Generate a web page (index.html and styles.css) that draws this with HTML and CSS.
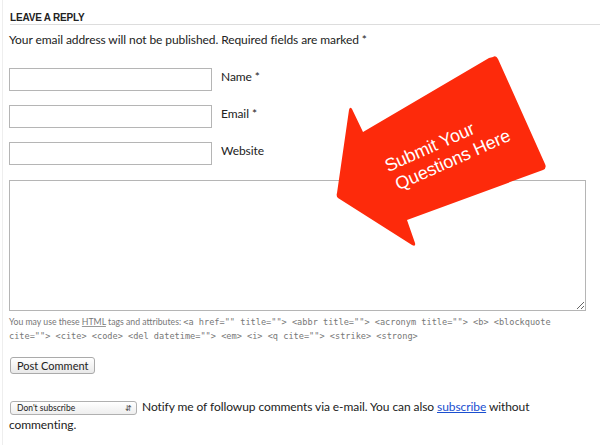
FILE: index.html
```html
<!DOCTYPE html>
<html>
<head>
<meta charset="utf-8">
<link rel="stylesheet" href="styles.css">
</head>
<body>
<div class="page">
  <h3 class="reply-title">Leave a Reply</h3>
  <p class="notes">Your email address will not be published. Required fields are marked *</p>
  <div class="field"><input class="text-input" type="text"><label>Name *</label></div>
  <div class="field"><input class="text-input" type="text"><label>Email *</label></div>
  <div class="field"><input class="text-input" type="text"><label>Website</label></div>
  <textarea class="comment"></textarea>
  <p class="allowed">You may use these <abbr class="html-abbr">HTML</abbr> tags and attributes: <code>&lt;a href="" title=""&gt; &lt;abbr title=""&gt; &lt;acronym title=""&gt; &lt;b&gt; &lt;blockquote cite=""&gt; &lt;cite&gt; &lt;code&gt; &lt;del datetime=""&gt; &lt;em&gt; &lt;i&gt; &lt;q cite=""&gt; &lt;strike&gt; &lt;strong&gt;</code></p>
  <button class="submit">Post Comment</button>
  <div class="subscribe">
    <div class="select"><span>Don't subscribe</span><span class="updown">&#8693;</span></div>
    <p class="subscribe-text">Notify me of followup comments via e-mail. You can also <a href="#">subscribe</a> without commenting.</p>
  </div>

  <svg class="arrow" width="230" height="210" viewBox="330 50 230 210">
    <path d="M493 57 Q496 55 498 59 L545 164 Q547 168 543 170 L407 220 L415 243 Q416 247 412 245 L338 198 Q336 196 337 193 L349 110 Q350 106 352 109 L363 132 L489 58 Z" fill="#fd2a0b"/>
    <g transform="rotate(-24 441 153)" fill="#fff" font-family="Liberation Sans, Arial, sans-serif" font-size="18" text-anchor="middle">
      <text x="433" y="149">Submit Your</text>
      <text x="449" y="170">Questions Here</text>
    </g>
  </svg>
</div>
</body>
</html>
```
FILE: styles.css
```css
html, body {
  margin: 0;
  background: #fff;
}
.page {
  position: relative;
  margin-left: 2px;
  border-left: 1px solid #eee;
  padding: 12px 0 0 6px;
  height: 433px;
  font-family: Lato, "Open Sans", sans-serif;
  font-size: 12px;
  letter-spacing: -0.08px;
  color: #222;
}
.reply-title {
  margin: 0 0 0 1px;
  font-family: "Liberation Sans", Arial, sans-serif;
  font-size: 10px;
  line-height: 11px;
  letter-spacing: -0.2px;
  font-weight: bold;
  text-transform: uppercase;
  color: #222;
  padding-bottom: 1px;
  border-bottom: 1px solid #ddd;
}
.notes {
  margin: 7px 0 0 0;
  line-height: 16px;
}
.field {
  display: flex;
  align-items: flex-start;
  gap: 9px;
  margin-top: 14px;
}
.field:first-of-type { margin-top: 20px; }
.field label {
  line-height: 18px;
}
.text-input {
  box-sizing: border-box;
  width: 203px;
  height: 23px;
  margin: 0;
  border: 1px solid #b5b5b5;
  background: #fff;
}
.comment {
  display: block;
  box-sizing: border-box;
  width: 577px;
  height: 131px;
  margin: 15px 0 0 0;
  border: 1px solid #b5b5b5;
  resize: both;
}
.allowed {
  margin: 4px 0 0 0;
  font-size: 8.7px;
  letter-spacing: 0;
  line-height: 13px;
  color: #777;
  width: 570px;
}
.html-abbr {
  text-decoration: underline;
  text-decoration-color: #999;
}
.allowed code {
  font-family: "DejaVu Sans Mono", monospace;
  font-size: 8.6px;
}
.submit {
  display: block;
  margin: 14px 0 0 1px;
  padding: 0 6px;
  height: 17px;
  font-family: Lato, sans-serif;
  font-size: 11px;
  color: #222;
  background: linear-gradient(#fff, #e9e9e9);
  border: 1px solid #aaa;
  border-radius: 3px;
}
.subscribe {
  margin-top: 24px;
  width: 580px;
}
.select {
  float: left;
  display: flex;
  justify-content: space-between;
  align-items: center;
  box-sizing: border-box;
  width: 127px;
  height: 14px;
  margin: 3px 5px 0 1px;
  padding: 0 4px 0 6px;
  font-size: 8.5px;
  line-height: 12px;
  letter-spacing: 0;
  border: 1px solid #b0b0b0;
  border-radius: 3px;
  background: linear-gradient(#fff, #eee);
}
.updown {
  font-size: 8px;
  color: #555;
}
.subscribe-text {
  margin: 0;
  line-height: 18px;
}
.subscribe a {
  color: #1a4fd0;
}
.arrow {
  position: absolute;
  left: 327px;
  top: 50px;
}
```
